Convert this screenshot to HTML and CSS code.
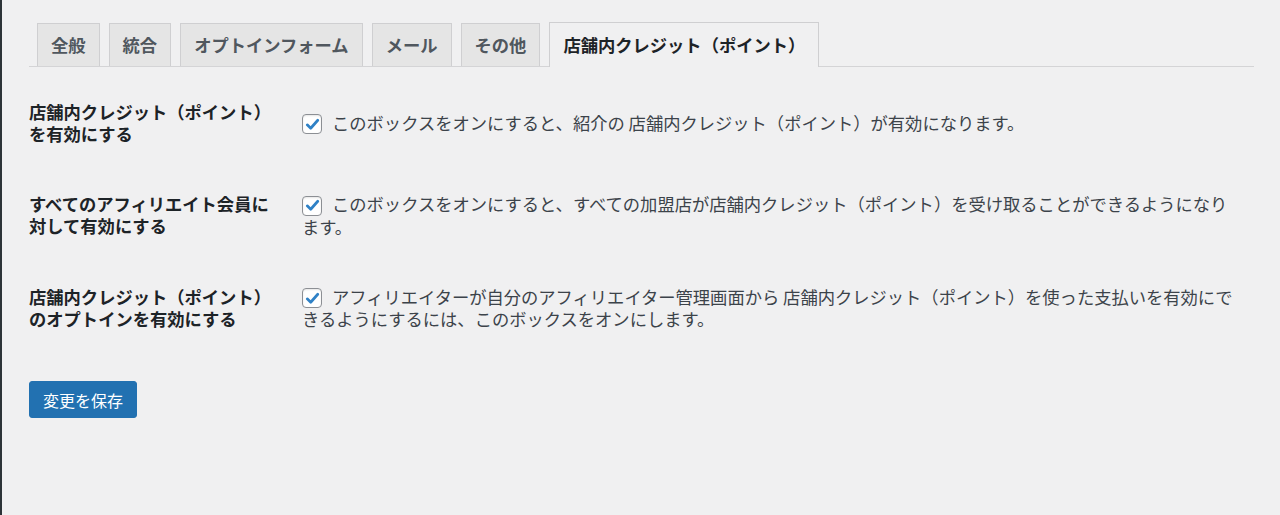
FILE: index.html
```html
<!DOCTYPE html>
<html lang="ja">
<head>
  <meta charset="UTF-8" />
  <title>設定 - 店舗内クレジット（ポイント）</title>
  <link rel="stylesheet" href="styles.css">
</head>
<body>

  <div class="wrap">
    <nav class="nav-tab-wrapper">
      <a class="nav-tab" href="#">全般</a>
      <a class="nav-tab" href="#">統合</a>
      <a class="nav-tab" href="#">オプトインフォーム</a>
      <a class="nav-tab" href="#">メール</a>
      <a class="nav-tab" href="#">その他</a>
      <a class="nav-tab nav-tab-active" href="#">店舗内クレジット（ポイント）</a>
    </nav>

    <form class="settings-form">
      <div class="form-table">
        <div class="form-row">
          <div class="form-label">店舗内クレジット（ポイント）を有効にする</div>
          <label class="form-field">
            <span class="checkbox"><svg viewBox="0 0 20 20" width="17" height="17"><path d="M3.8 10.4 L7.9 14.4 L16.2 5" fill="none" stroke="#2f81c6" stroke-width="3.2" stroke-linecap="round" stroke-linejoin="round"/></svg></span>このボックスをオンにすると、紹介の 店舗内クレジット（ポイント）が有効になります。
          </label>
        </div>

        <div class="form-row">
          <div class="form-label">すべてのアフィリエイト会員に対して有効にする</div>
          <label class="form-field">
            <span class="checkbox"><svg viewBox="0 0 20 20" width="17" height="17"><path d="M3.8 10.4 L7.9 14.4 L16.2 5" fill="none" stroke="#2f81c6" stroke-width="3.2" stroke-linecap="round" stroke-linejoin="round"/></svg></span>このボックスをオンにすると、すべての加盟店が店舗内クレジット（ポイント）を受け取ることができるようになります。
          </label>
        </div>

        <div class="form-row">
          <div class="form-label">店舗内クレジット（ポイント）のオプトインを有効にする</div>
          <label class="form-field">
            <span class="checkbox"><svg viewBox="0 0 20 20" width="17" height="17"><path d="M3.8 10.4 L7.9 14.4 L16.2 5" fill="none" stroke="#2f81c6" stroke-width="3.2" stroke-linecap="round" stroke-linejoin="round"/></svg></span>アフィリエイターが自分のアフィリエイター管理画面から 店舗内クレジット（ポイント）を使った支払いを有効にできるようにするには、このボックスをオンにします。
          </label>
        </div>
      </div>

      <p class="submit">
        <button type="submit" class="button-primary">変更を保存</button>
      </p>
    </form>
  </div>

</body>
</html>
```

FILE: styles.css
```css
html, body {
  height: 100%;
}
body {
  margin: 0;
  background: #f0f0f1;
  border-left: 2px solid #2c3338;
  font-family: "Noto Sans CJK JP", "Noto Sans", sans-serif;
  color: #3c434a;
  box-sizing: border-box;
}
.wrap {
  padding: 0 26px 0 27px;
}
.nav-tab-wrapper {
  display: flex;
  align-items: flex-end;
  padding-top: 22px;
  border-bottom: 1px solid #d4d4d6;
}
.nav-tab {
  display: block;
  height: 43px;
  box-sizing: border-box;
  margin-left: 8px;
  padding: 0 13px;
  border: 1px solid #cfcfd1;
  border-bottom: none;
  background: #e5e5e5;
  color: #50575e;
  font-size: 17.3px;
  font-weight: bold;
  line-height: 42px;
  text-decoration: none;
  white-space: nowrap;
}
.nav-tab + .nav-tab {
  margin-left: 9px;
}
.nav-tab-active {
  height: 45px;
  margin-bottom: -1px;
  line-height: 44px;
  background: #f0f0f1;
  color: #1d2327;
}
.settings-form {
  margin-top: 10px;
}
.form-row {
  display: grid;
  grid-template-columns: 250px 1fr;
  column-gap: 23px;
  align-items: center;
  padding: 24px 16px 24px 0;
}
.form-label {
  font-size: 17.3px;
  font-weight: bold;
  line-height: 22px;
  color: #1d2327;
}
.form-field {
  font-size: 17.3px;
  line-height: 22px;
  color: #3c434a;
  cursor: pointer;
}
.checkbox {
  display: inline-flex;
  align-items: center;
  justify-content: center;
  width: 20px;
  height: 20px;
  box-sizing: border-box;
  margin-right: 10px;
  vertical-align: -3px;
  border: 1px solid #8c8f94;
  border-radius: 4px;
  background: #fff;
  box-shadow: inset 0 1px 2px rgba(0,0,0,0.1);
}
.submit {
  margin: 27px 0 0;
}
.button-primary {
  height: 37px;
  padding: 0 13px;
  border: 1px solid #2271b1;
  border-radius: 3px;
  background: #2271b1;
  color: #fff;
  font-family: inherit;
  font-size: 16px;
  cursor: pointer;
}
.button-primary:hover {
  background: #135e96;
}
```
